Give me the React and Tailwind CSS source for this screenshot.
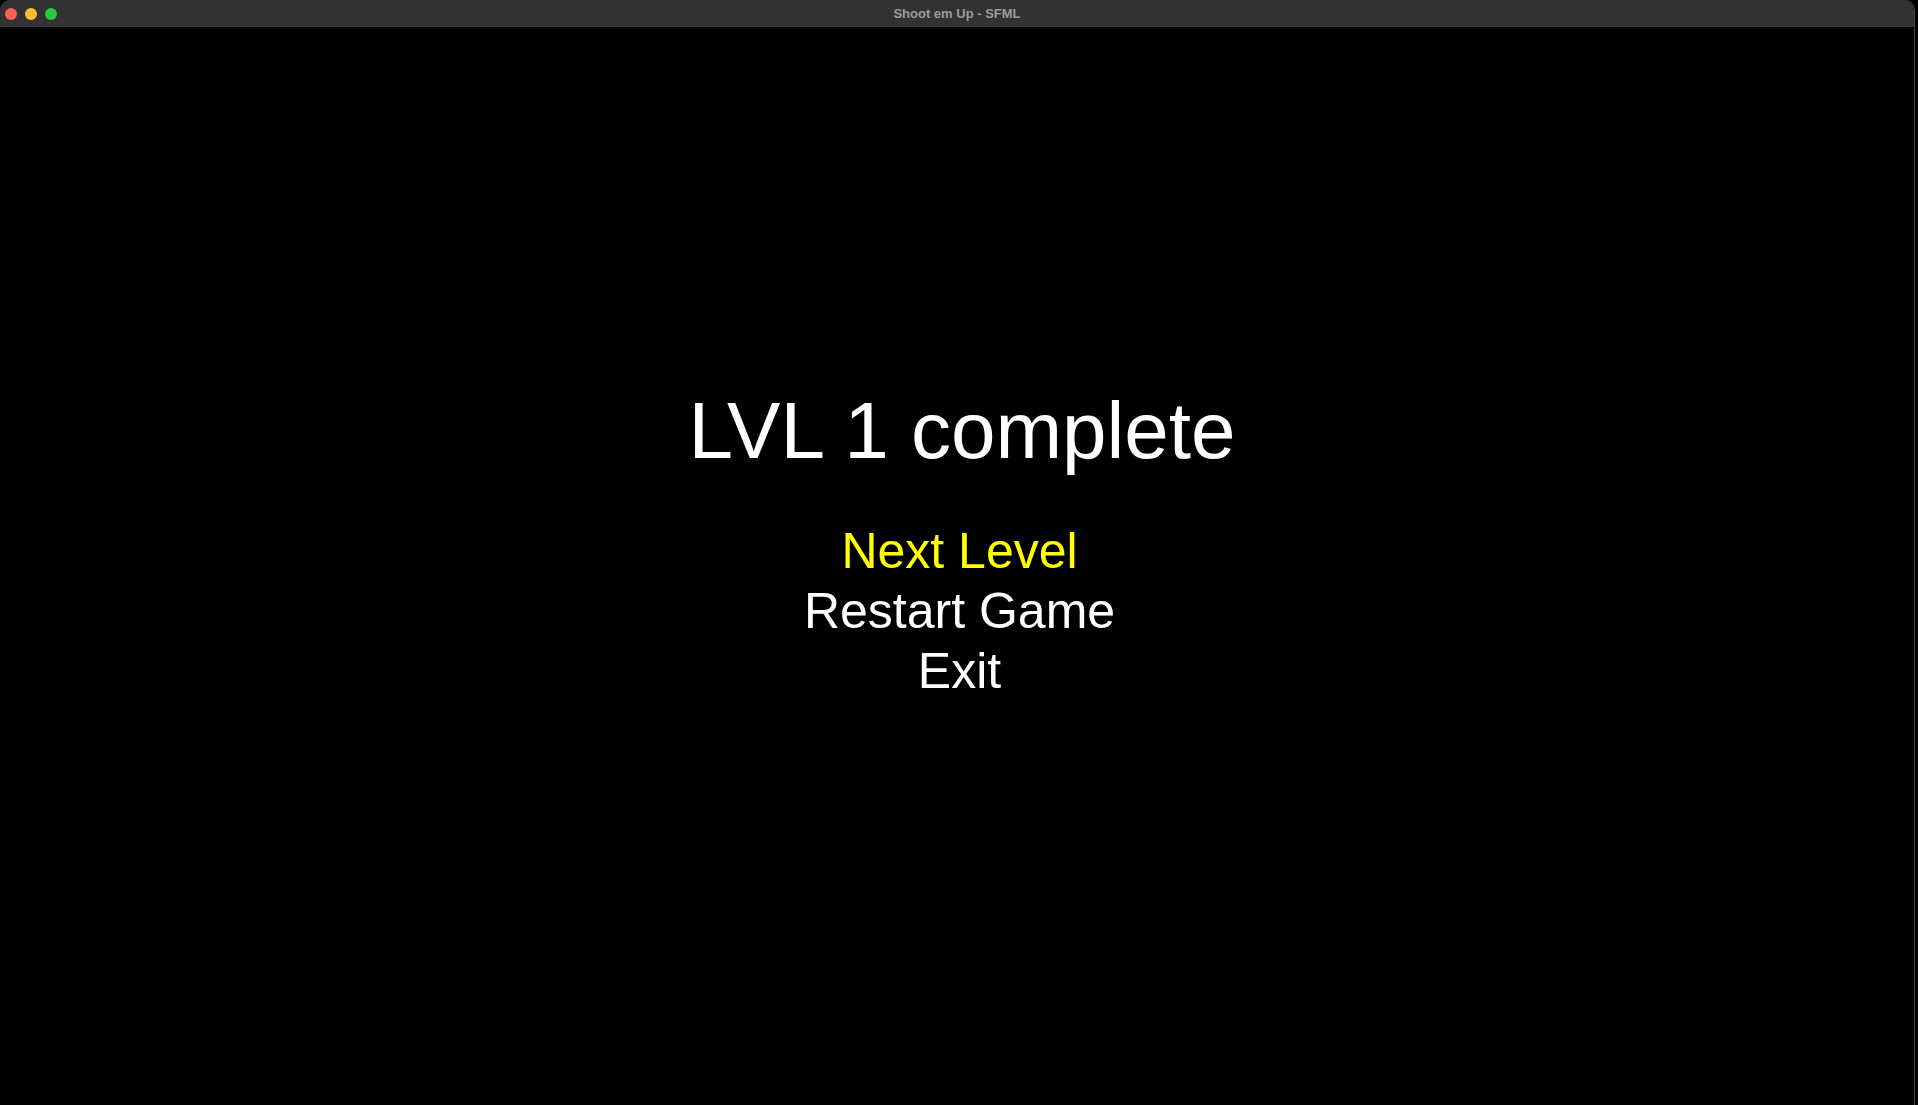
const menuItems = [
    { label: 'Next Level', selected: true },
    { label: 'Restart Game', selected: false },
    { label: 'Exit', selected: false },
];

const TrafficLights = () => {
    return (
        <div className="flex items-center gap-[8px] pl-[5px]">
            <span className="block h-[12px] w-[12px] rounded-full bg-[#fe5f57]" />
            <span className="block h-[12px] w-[12px] rounded-full bg-[#febc2e]" />
            <span className="block h-[12px] w-[12px] rounded-full bg-[#28c840]" />
        </div>
    );
};

const App = () => {
    return (
        <div className="h-[1105px] w-[1918px] overflow-hidden bg-black" style={{ fontFamily: '"Liberation Sans", Arial, sans-serif' }}>
            <div className="flex h-full w-[1915px] flex-col overflow-hidden rounded-t-[10px] border-r border-[#4a4a4a]">
                {/* title bar */}
                <div className="relative flex h-[27px] shrink-0 items-center bg-[#323232]">
                    <TrafficLights />
                    <div className="absolute inset-0 flex items-center justify-center text-[13px] font-bold text-[#9b9b9b]">
                        Shoot em Up - SFML
                    </div>
                </div>

                {/* game view */}
                <div className="flex flex-1 flex-col items-center bg-black pt-[364px]">
                    <h1 className="ml-[10px] text-[80px] leading-[80px] text-white">
                        LVL 1 complete
                    </h1>
                    <ul className="ml-[5px] mt-[50px] flex flex-col items-center">
                        {menuItems.map((item) => (
                            <li
                                key={item.label}
                                className={`text-[50px] leading-[60px] ${item.selected ? 'text-[#ffff00]' : 'text-white'}`}
                            >
                                {item.label}
                            </li>
                        ))}
                    </ul>
                </div>
            </div>
        </div>
    );
};

export default App;
